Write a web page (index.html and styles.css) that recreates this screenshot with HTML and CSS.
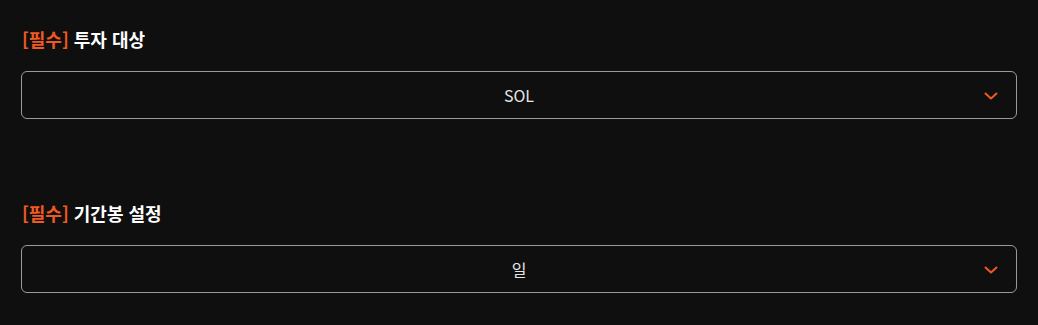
FILE: index.html
```html
<!DOCTYPE html>
<html lang="ko">
<head>
<meta charset="utf-8">
<link rel="stylesheet" href="styles.css">
</head>
<body>
<div class="form">
  <div class="field">
    <div class="label"><span class="req">[필수]</span> 투자 대상</div>
    <div class="select">
      <span class="value">SOL</span>
      <svg class="chev" width="14" height="8" viewBox="0 0 14 8"><path d="M1.5 1.5 L7 6.5 L12.5 1.5" fill="none" stroke="#f0591f" stroke-width="2" stroke-linecap="round" stroke-linejoin="round"/></svg>
    </div>
  </div>
  <div class="field">
    <div class="label"><span class="req">[필수]</span> 기간봉 설정</div>
    <div class="select">
      <span class="value">일</span>
      <svg class="chev" width="14" height="8" viewBox="0 0 14 8"><path d="M1.5 1.5 L7 6.5 L12.5 1.5" fill="none" stroke="#f0591f" stroke-width="2" stroke-linecap="round" stroke-linejoin="round"/></svg>
    </div>
  </div>
</div>
</body>
</html>
```
FILE: styles.css
```css
html, body {
  margin: 0;
  padding: 0;
  background: #0f0f0f;
}
body {
  font-family: "Noto Sans CJK KR", "Noto Sans", sans-serif;
  color: #ffffff;
}
.form {
  padding: 27px 21px 0 22px;
  display: flex;
  flex-direction: column;
  gap: 82px;
}
.field {
  display: flex;
  flex-direction: column;
  gap: 20px;
}
.label {
  font-size: 18px;
  font-weight: 700;
  line-height: 24px;
  color: #ffffff;
}
.req {
  color: #ee5a22;
}
.select {
  position: relative;
  height: 46px;
  border: 1px solid #9a9a9a;
  border-radius: 6px;
  display: flex;
  align-items: center;
  justify-content: center;
  margin-left: -1px;
}
.value {
  font-size: 16px;
  color: #e6e6e6;
  line-height: 20px;
}
.chev {
  position: absolute;
  right: 18px;
  top: 20px;
}
```
